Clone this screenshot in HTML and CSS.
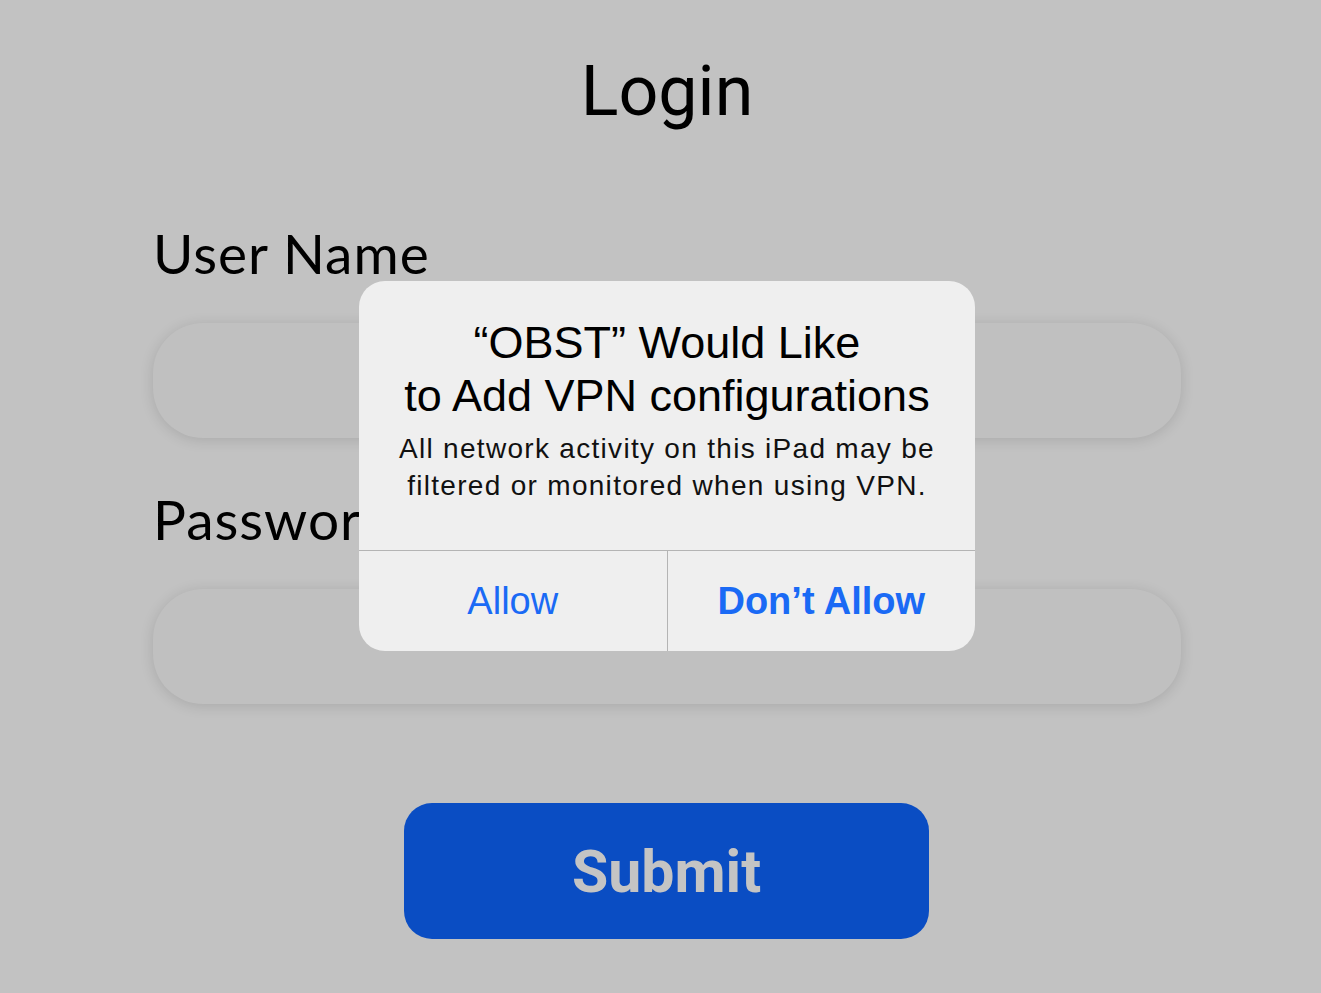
FILE: index.html
```html
<!DOCTYPE html>
<html lang="en">
<head>
    <meta charset="UTF-8">
    <meta name="viewport" content="width=device-width, initial-scale=1.0">
    <title>Login</title>
    <link rel="stylesheet" href="styles.css">
</head>
<body>

    <div class="page">
        <h1 class="title">Login</h1>

        <label class="field-label" for="username">User Name</label>
        <input class="field" id="username" type="text">

        <label class="field-label pass-label" for="password">Password</label>
        <input class="field" id="password" type="password">

        <button class="submit">Submit</button>
    </div>

    <!-- System alert -->
    <div class="alert">
        <div class="alert-body">
            <div class="alert-title">“OBST” Would Like<br>to Add VPN configurations</div>
            <div class="alert-message">All network activity on this iPad may be<br>filtered or monitored when using VPN.</div>
        </div>
        <div class="alert-actions">
            <button class="alert-btn">Allow</button>
            <button class="alert-btn strong">Don’t Allow</button>
        </div>
    </div>

</body>
</html>
```

FILE: styles.css
```css
body {
    margin: 0;
    background-color: #c2c2c2;
    font-family: Roboto, "Liberation Sans", sans-serif;
    height: 993px;
    overflow: hidden;
}
.page {
    width: 1028px;
    margin-left: 153px;
    display: flex;
    flex-direction: column;
}
.title {
    margin: 49px 0 0;
    font-size: 70px;
    line-height: 84px;
    font-weight: 400;
    text-align: center;
    color: #000;
}
.field-label {
    font-family: Lato, "Noto Sans", sans-serif;
    font-size: 55px;
    line-height: 64px;
    color: #000;
    margin-top: 88px;
    letter-spacing: 1px;
}
.pass-label {
    margin-top: 49px;
}
.field {
    height: 113px;
    margin-top: 38px;
    border: none;
    border-radius: 50px;
    background: #c0c0c0;
    box-shadow: 0 2px 14px rgba(0, 0, 0, 0.13);
    outline: none;
}
.submit {
    align-self: center;
    margin: 99px 0 0 -1px;
    width: 525px;
    height: 136px;
    border: none;
    border-radius: 28px;
    background: #0a4dc3;
    color: #c4c4c4;
    font-family: Roboto, "Liberation Sans", sans-serif;
    font-size: 59px;
    font-weight: 700;
}

/* Alert */
.alert {
    position: absolute;
    left: 359px;
    top: 281px;
    width: 616px;
    height: 370px;
    background: #efefef;
    border-radius: 26px;
    display: flex;
    flex-direction: column;
    overflow: hidden;
    font-family: "Liberation Sans", Arial, sans-serif;
}
.alert-body {
    flex: 1;
    text-align: center;
    padding-top: 35px;
}
.alert-title {
    font-size: 45px;
    line-height: 53px;
    color: #000;
}
.alert-message {
    font-size: 28px;
    line-height: 37px;
    margin-top: 8px;
    color: #111;
    letter-spacing: 1.3px;
}
.alert-actions {
    height: 100px;
    border-top: 1px solid #b4b4b4;
    display: flex;
}
.alert-btn {
    flex: 1;
    border: none;
    background: transparent;
    font-family: "Liberation Sans", Arial, sans-serif;
    font-size: 38px;
    color: #1a6af5;
    padding: 0;
}
.alert-btn + .alert-btn {
    border-left: 1px solid #b4b4b4;
}
.alert-btn.strong {
    font-weight: 700;
}
```
